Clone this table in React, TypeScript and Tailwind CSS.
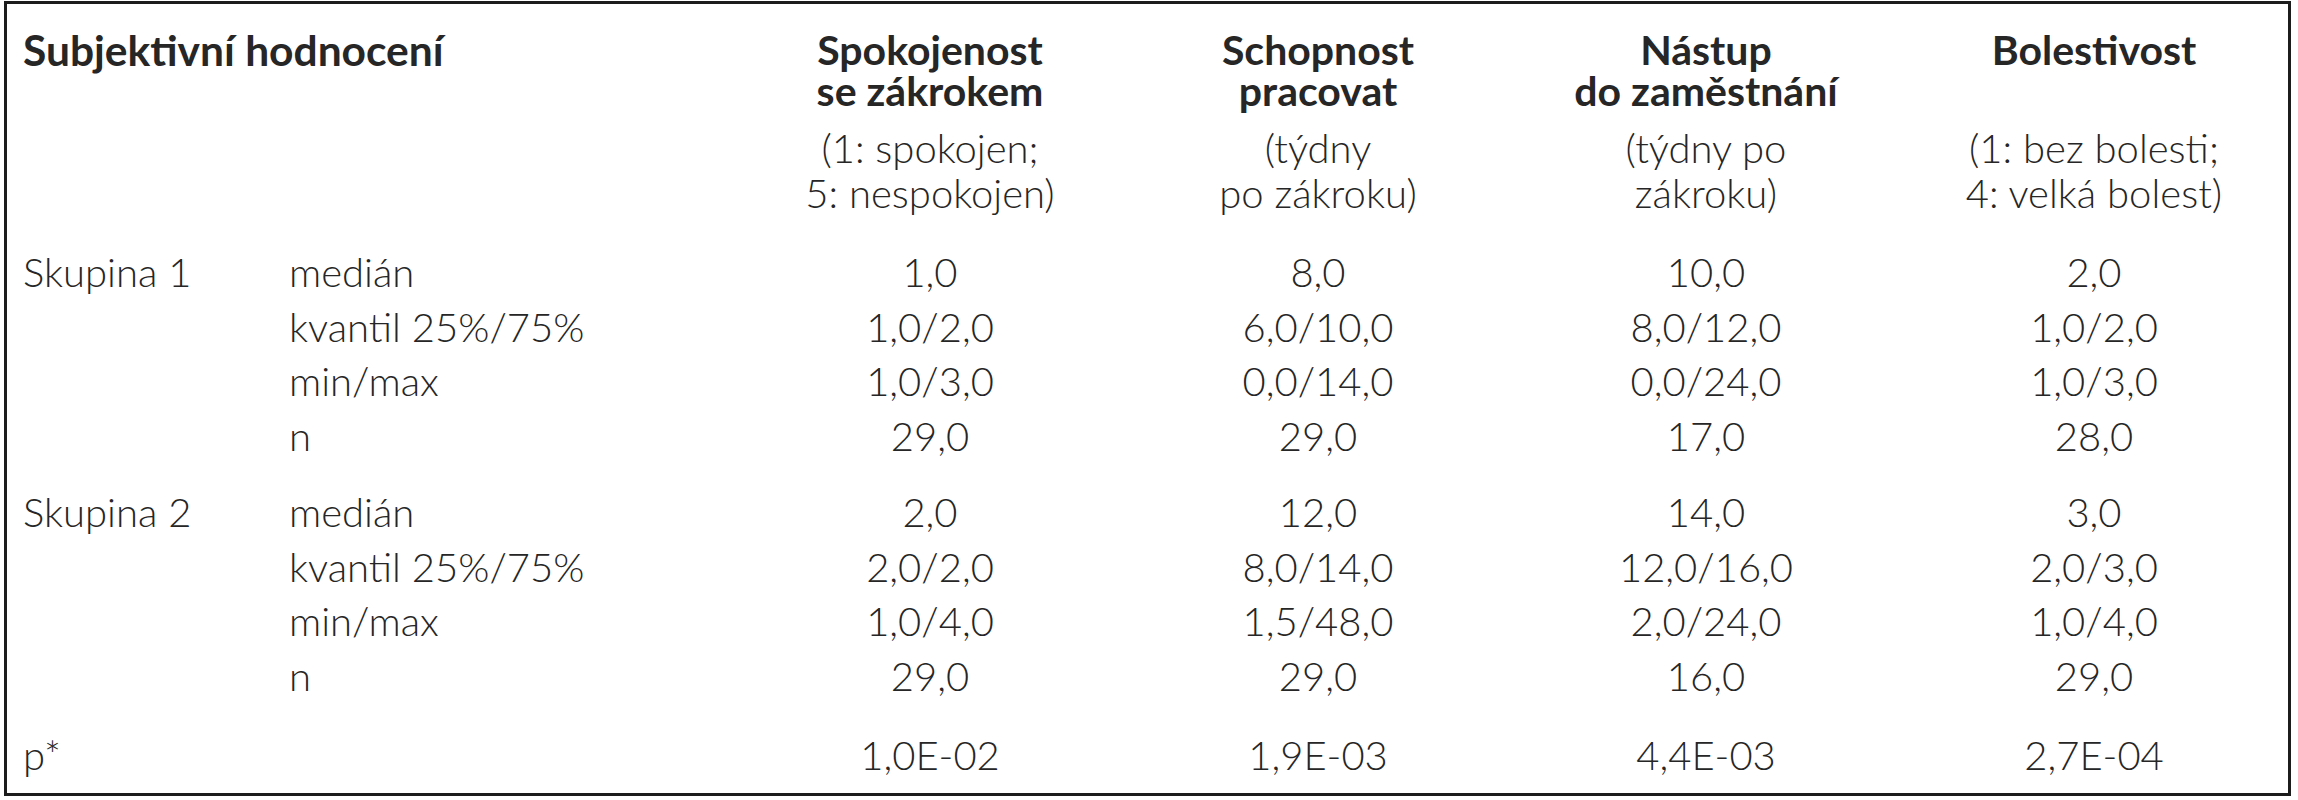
const cols = 'grid grid-cols-[266px_447px_388px_388px_388px_388px]';

type HeadCell = { bold: string[]; note: string[] };

const heads: HeadCell[] = [
  { bold: ['Spokojenost', 'se zákrokem'], note: ['(1: spokojen;', '5: nespokojen)'] },
  { bold: ['Schopnost', 'pracovat'], note: ['(týdny', 'po zákroku)'] },
  { bold: ['Nástup', 'do zaměstnání'], note: ['(týdny po', 'zákroku)'] },
  { bold: ['Bolestivost', '\u00a0'], note: ['(1: bez bolesti;', '4: velká bolest)'] },
];

const groups = [
  {
    name: 'Skupina 1',
    rows: [
      ['medián', '1,0', '8,0', '10,0', '2,0'],
      ['kvantil 25%/75%', '1,0/2,0', '6,0/10,0', '8,0/12,0', '1,0/2,0'],
      ['min/max', '1,0/3,0', '0,0/14,0', '0,0/24,0', '1,0/3,0'],
      ['n', '29,0', '29,0', '17,0', '28,0'],
    ],
  },
  {
    name: 'Skupina 2',
    rows: [
      ['medián', '2,0', '12,0', '14,0', '3,0'],
      ['kvantil 25%/75%', '2,0/2,0', '8,0/14,0', '12,0/16,0', '2,0/3,0'],
      ['min/max', '1,0/4,0', '1,5/48,0', '2,0/24,0', '1,0/4,0'],
      ['n', '29,0', '29,0', '16,0', '29,0'],
    ],
  },
];

const pValues = ['1,0E-02', '1,9E-03', '4,4E-03', '2,7E-04'];

export default function App() {
  return (
    <div className="bg-white min-h-[800px] pt-[1px] pl-[4px] font-['Lato','Open_Sans',sans-serif] text-[#262626]">
      <div className="w-[2287px] h-[795px] border-[3px] border-[#1c1c1c] pl-[16px] pt-[24px]">
        {/* hlavička */}
        <div className={cols}>
          <div className="col-span-2 font-bold text-[42.5px] leading-[44px]">Subjektivní hodnocení</div>
          {heads.map((h) => (
            <div key={h.bold[0]} className="text-center">
              <div className="font-bold text-[41px] leading-[41px] pt-[1px]">
                {h.bold[0]}
                <br />
                {h.bold[1]}
              </div>
              <div className="mt-[15px] font-light text-[40px] leading-[45px]">
                {h.note[0]}
                <br />
                {h.note[1]}
              </div>
            </div>
          ))}
        </div>

        {groups.map((g, gi) => (
          <div key={g.name} className={gi === 0 ? 'mt-[29px]' : 'mt-[22px]'}>
            {g.rows.map((r, ri) => (
              <div key={ri} className={`${cols} h-[54.5px] items-center font-light text-[40px] leading-[54.5px]`}>
                <div>{ri === 0 ? g.name : ''}</div>
                <div>{r[0]}</div>
                {r.slice(1).map((v, vi) => (
                  <div key={vi} className="text-center">{v}</div>
                ))}
              </div>
            ))}
          </div>
        ))}

        <div className={`${cols} mt-[25px] h-[54.5px] items-center font-light text-[40px] leading-[54.5px]`}>
          <div>p*</div>
          <div></div>
          {pValues.map((v) => (
            <div key={v} className="text-center">{v}</div>
          ))}
        </div>
      </div>
    </div>
  );
}
